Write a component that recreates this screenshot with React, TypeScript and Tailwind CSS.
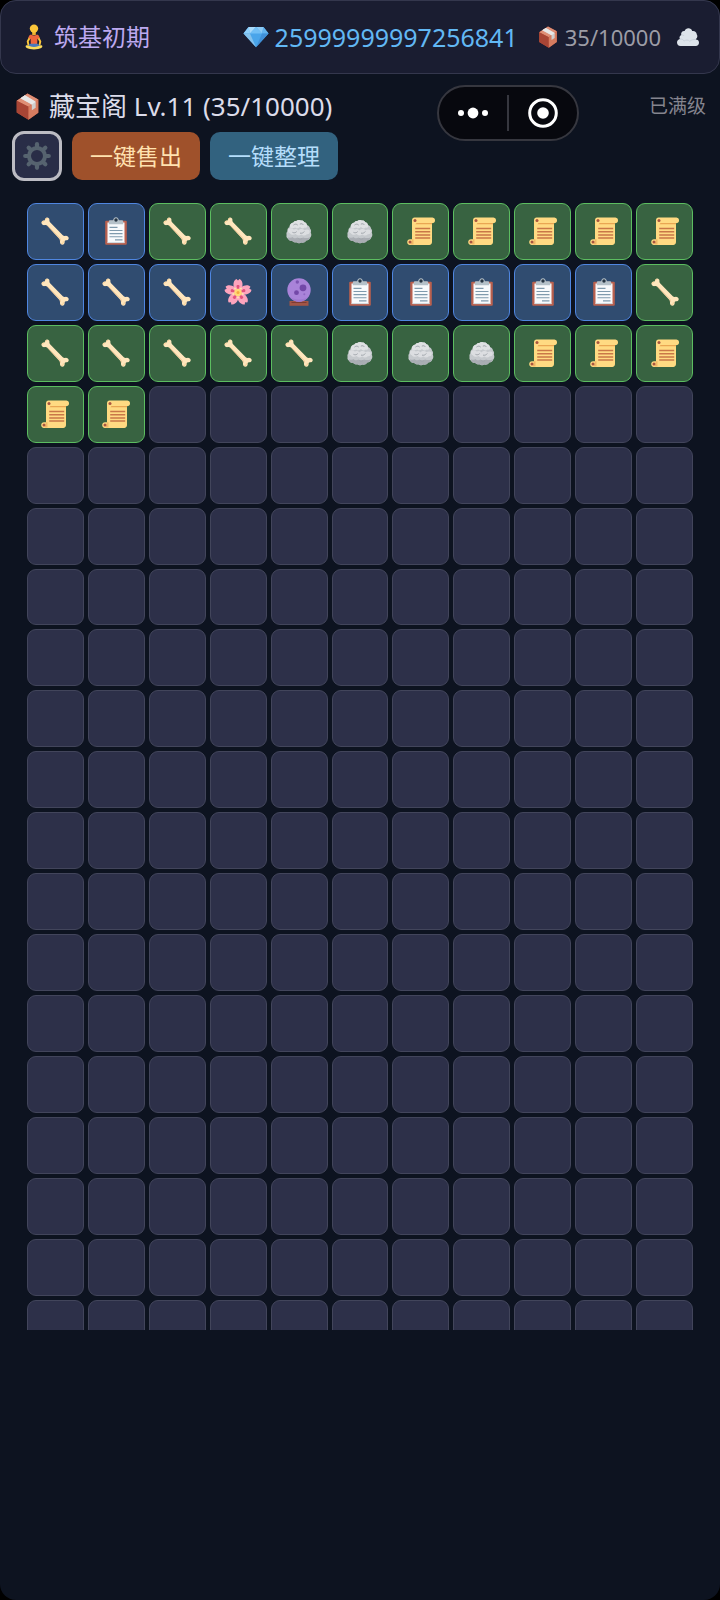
import type { ReactNode } from "react";

type Rarity = "rare" | "common";
type ItemKind = "bone" | "clipboard" | "rock" | "scroll" | "blossom" | "orb";

interface Item {
  kind: ItemKind;
  rarity: Rarity;
}

const COLUMNS = 11;
const ROWS = 19;

function stack(kind: ItemKind, rarity: Rarity, count: number): Item[] {
  return Array.from({ length: count }, () => ({ kind, rarity }));
}

const items: Item[] = [
  ...stack("bone", "rare", 1),
  ...stack("clipboard", "rare", 1),
  ...stack("bone", "common", 2),
  ...stack("rock", "common", 2),
  ...stack("scroll", "common", 5),
  ...stack("bone", "rare", 3),
  ...stack("blossom", "rare", 1),
  ...stack("orb", "rare", 1),
  ...stack("clipboard", "rare", 5),
  ...stack("bone", "common", 6),
  ...stack("rock", "common", 3),
  ...stack("scroll", "common", 5),
];

function BoneIcon() {
  return (
    <svg viewBox="0 0 28 28" className="size-7" aria-hidden="true">
      <path
        d="M5.2 0.8c1.7-.9 3.5.5 3.2 2.400-.1.900.2 1.600.9 2.300l12.500 12.700c.7.7 1.500.9 2.400.700 1.900-.4 3.700.9 3.500 2.500-.2 1.300-1.300 1.900-2.700 1.900-1 .1-1.300.5-1.300 1.400 0 1.700-.8 2.900-2.100 3-1.700.1-2.900-1.500-2.600-3.300.2-1.100 0-1.900-.8-2.700L6.300 8.700c-.7-.7-1.500-.8-2.500-.6C2 8.400.4 7.300.5 5.700.6 4.400 1.500 3.700 2.800 3.600c.8 0 1-.3 1.100-1 .1-.8.500-1.400 1.300-1.800z"
        fill="#ffe6bd"
      />
      <path d="M6.500 8.600 18.600 21c.7.7.9 1.500.7 2.700" fill="none" stroke="#f2c998" strokeWidth="1" />
      <path d="M1 5.500c.2-1 1-1.300 2-1.400M4.500 2.500c.2-.8.800-1.200 1.600-1.200M20.500 26.500c1.300.3 1.900-.7 1.900-2.100" fill="none" stroke="#fbd093" strokeWidth="1" />
    </svg>
  );
}

function ClipboardIcon() {
  return (
    <svg viewBox="0 0 28 28" className="size-7" aria-hidden="true">
      <rect x="3.200" y="3.800" width="21.600" height="24" rx="1" fill="#b9604e" />
      <path d="M5.500 5.500h17v20.500h-17z" fill="#f8fafc" />
      <path d="M5.500 25.200h17v.9h-17z" fill="#c9d3d9" />
      <path d="M6.800 7.300V4.700c0-.9.700-1.400 1.600-1.400h2.700C11.500 1.400 12.500.3 14 .3s2.500 1.100 2.900 3h2.700c.9 0 1.600.5 1.600 1.400v2.600z" fill="#b5c1c9" />
      <circle cx="14" cy="3" r="1.700" fill="#263442" />
      <path d="M7.500 10.400h8M7.500 13.500h13M7.500 16.600h13M7.500 19.700h13M13 22.900h7.500" stroke="#7f9aad" strokeWidth="1.100" />
    </svg>
  );
}

function RockIcon() {
  return (
    <svg viewBox="0 0 28 28" className="size-7" aria-hidden="true">
      <path
        d="M8.500 5.500c.5-1 1.600-1.300 2.800-1.400C12.500 3 14.600 2.700 16 3.600c1.500-.2 2.700.5 3.300 1.700 1.500.3 2.500 1.300 2.600 2.700 1.600.6 2.900 1.800 3.100 3.400 1.200 1.300 1.300 2.700.8 4.100.9 1.900.7 3.800-.6 5.200-.6 1.800-2.200 2.700-4 2.700-1 1.600-2.700 2.500-4.600 2.200-1.700 1-4 .9-5.300-.3-1.700.4-3.300-.2-4.100-1.500-2 .3-3.700-.5-4.200-2-1.400-.9-1.900-2.300-1.400-3.700-.4-1.500-.1-2.900.8-3.900-.3-2 .5-3.500 2.200-4.300.1-2.300 1.500-3.900 3.900-4.400z"
        fill="#c5c9cd"
      />
      <path
        d="M8.500 5.500c.5-1 1.600-1.300 2.800-1.400C12.500 3 14.600 2.700 16 3.600c1.500-.2 2.700.5 3.300 1.700 1.500.3 2.500 1.300 2.600 2.700 1.200 1.900-.2 3.300-2.200 2.600-1.600 1.400-3.700 1-4.700-.5-1.600 1.500-3.600 1.500-4.700.3-2 1.200-4.600.9-5.700-.5.100-2.300 1.500-3.900 3.900-4.400z"
        fill="#dfe1e3"
      />
      <path d="M3 12.600c1.600-1.700 4.200-1.800 5.700-.2 1.800-1 3.800-.5 4.700 1 1.700-1.800 4.500-1.900 6.100-.2 1.700-1.200 3.800-1 5.100.2.700 2.300-.4 4-2.700 3.900-1.500 1.500-4.100 1.600-5.600.1-1.800 1.500-4.400 1.300-5.600-.4-1.900 1.300-4.600 1-5.800-.7-1.500-.3-2.300-1.900-1.900-3.700z" fill="#dcdee1" />
      <path d="M3 20.200c1.500.9 3.200.7 4.300-.3 1.400 1.500 3.500 1.700 5.200.7 1.600 1.300 4 1.300 5.600-.1 1.900.9 4.500.8 6.800-.3-.4 2.100-1.900 3.200-3.700 3.200-1 1.600-2.700 2.500-4.600 2.200-1.700 1-4 .9-5.300-.3-1.700.4-3.300-.2-4.100-1.500-2 .3-4-.9-4.200-3.600z" fill="#a9adb3" />
      <path d="M8.800 7.800c1.200-.9 2.600-.9 3.600 0m2.800-.8c1.300-.6 2.400-.3 3 .6M7.800 15.500c1.400.6 2.700.4 3.600-.6m4 1.300c1.600.3 2.900-.2 3.700-1.400m-5.500 6.900c1 .6 2.200.6 3.100 0" fill="none" stroke="#a1a6ac" strokeWidth="1" strokeLinecap="round" />
    </svg>
  );
}

function ScrollIcon() {
  return (
    <svg viewBox="0 0 28 28" className="size-7" aria-hidden="true">
      <path d="M7.500.5h18A2.700 2.700 0 0 1 28 3.400c0 1.700-1.200 2.800-3 2.800V25c0 1.700-1.100 2.900-2.700 2.900H2.900C1.200 27.900.2 26.700.2 25s1.200-2.800 2.800-2.800h2V3.300C5 1.600 6 .5 7.500.5z" fill="#ffda82" />
      <path d="M9.500 5.900H25v1.300H8.500z" fill="#e9a653" />
      <path d="M5 22.200h1.500v5.300H3.700z" fill="#f2b866" />
      <circle cx="8" cy="3.400" r="1.500" fill="#a9553f" />
      <circle cx="3" cy="25" r="1.500" fill="#a9553f" />
      <path d="M8.200 11.500h15M8.200 14.700h15M8.200 17.900h15M8.200 21.100h15" stroke="#c97748" strokeWidth="1.500" />
    </svg>
  );
}

const petalTurns = [0, 72, 144, 216, 288];

function BlossomIcon() {
  return (
    <svg viewBox="0 0 28 28" className="size-7" aria-hidden="true">
      {petalTurns.map((turn) => (
        <g key={turn} transform={`rotate(${turn} 14 14.500)`}>
          <path d="M14 14.500C10 11.500 8.800 7.500 9.800 4.200c.5-1.700 1.500-3 2.700-3.300L14 2.600l1.500-1.700c1.200.3 2.200 1.600 2.700 3.300 1 3.300-.2 7.300-4.200 10.300z" fill="#fda4bd" />
          <path d="M14 13.500 12.400 8c.2-1.500 3-1.500 3.200 0z" fill="#e2517c" />
        </g>
      ))}
      <circle cx="14" cy="14.500" r="3.800" fill="#ffd977" />
      <circle cx="14" cy="14.500" r="1.500" fill="#f6a944" />
      <g fill="#ffe9a8">
        <circle cx="11" cy="10.500" r=".9" />
        <circle cx="17" cy="10.500" r=".9" />
        <circle cx="18.800" cy="16" r=".9" />
        <circle cx="14" cy="19.500" r=".9" />
        <circle cx="9.200" cy="16" r=".9" />
      </g>
    </svg>
  );
}

function OrbIcon() {
  return (
    <svg viewBox="0 0 28 28" className="size-7" aria-hidden="true">
      <path d="M4.500 23h19v4.800h-19z" fill="#a25545" />
      <path d="M6.500 24.500h15" stroke="#7a3b36" strokeWidth="1" />
      <circle cx="14" cy="12" r="11.700" fill="#a983d9" />
      <path d="M4.600 18.900a11.700 11.700 0 0 0 18.800 0c-5 3.300-13.800 3.300-18.800 0z" fill="#9f79d0" />
      <circle cx="18" cy="9.800" r="3.400" fill="#7348a8" />
      <circle cx="11.500" cy="14.700" r="2.400" fill="#7348a8" />
      <circle cx="12.300" cy="4" r="1.700" fill="#7d55b2" />
      <circle cx="19.300" cy="16.200" r="1" fill="#8e69c2" />
    </svg>
  );
}

function MeditationIcon() {
  return (
    <svg viewBox="0 0 26 26" className="size-[26px]" aria-hidden="true">
      <path d="M11.200 7.500h3.600V11h-3.600z" fill="#eeb22f" />
      <circle cx="13" cy="4.600" r="4.200" fill="#fcc63a" />
      <path d="M9.300 12.500 6.700 17.500l.8 3.500M16.700 12.500l2.600 5-.8 3.500" fill="none" stroke="#fcc63a" strokeWidth="1.900" strokeLinecap="round" strokeLinejoin="round" />
      <path d="M10 10.400c1.700 1.300 4.300 1.300 6 0 1.600.4 2.300 1.700 2.600 3.600l-2.200 1-.2 5.500H9.800L9.600 15l-2.200-1c.3-1.900 1-3.200 2.600-3.600z" fill="#f0663c" />
      <path d="M9.500 19.800h7l3 2-4.500 2.400h-4l-4.500-2.400z" fill="#4b79bc" />
      <path d="M5.700 21.300c2.300 0 4.500 1.800 7.300 1.800s5-1.800 7.300-1.800c1.300.2 1.500 1.700.3 2.400-2 1.200-4.600 1.700-7.600 1.700s-5.600-.5-7.600-1.700c-1.200-.7-1-2.200.3-2.400z" fill="#fbdc5b" />
    </svg>
  );
}

function GemIcon() {
  return (
    <svg viewBox="0 0 26 26" className="size-[26px]" aria-hidden="true">
      <path d="M5.500 3h15l5 6.500L13 23.200.5 9.500z" fill="#4aa5ea" />
      <path d="M5.500 3 7 9.500H.5z" fill="#8fd0fb" />
      <path d="M5.500 3h7.500L7 9.500z" fill="#a9dafa" />
      <path d="M13 3h7.500L19 9.500z" fill="#8ccaf5" />
      <path d="M13 3 7 9.500h12z" fill="#72bff5" />
      <path d="M20.500 3 19 9.500h6.500z" fill="#63b3ee" />
      <path d="M.5 9.500H7l6 13.700z" fill="#86c2ec" />
      <path d="M19 9.500h6.500L13 23.200z" fill="#4090d8" />
    </svg>
  );
}

function BoxIcon({ className }: { className: string }) {
  return (
    <svg viewBox="0 0 28 28" className={className} aria-hidden="true">
      <path d="M14 .6 2.800 8v12.300L15 27.700 25.200 20.500V6.800z" fill="#b64c36" />
      <path d="M2.800 8 14 .6l11.200 6.200L15 14.300z" fill="#df8f76" />
      <path d="M2.800 8v12.300L15 27.700V14.300z" fill="#a84535" />
      <path d="M15 14.300 25.200 6.800v13.700L15 27.700z" fill="#d67c60" />
      <path d="m6.700 5.400 4.600-3L22.500 9v6.300l-4 2.500v-6z" fill="#cfcfcf" />
      <path d="m6.700 5.400 4.600-3L22.500 9l-4 2.800z" fill="#e8e8e8" />
    </svg>
  );
}

function CloudIcon() {
  return (
    <svg viewBox="0 0 22 18" className="h-[18px] w-[22px]" aria-hidden="true">
      <path d="M3.500 18C1.300 18 0 16.500 0 14.600c0-1.900 1.200-3.200 2.900-3.500C2 9.500 2.600 7.700 4.300 7.100 3.600 4.700 5.300 2.700 7.600 3 8.300 1.200 9.800.2 11.500.3c1.800 0 3.200 1 3.700 2.700 2.300-.5 4.500 1 4.500 3.300 1.100 1.500.8 3.500-.7 4.600l-.4.700c2-.1 3.400 1.200 3.400 3.100 0 1.900-1.300 3.300-3.200 3.300z" fill="#dde3ea" />
      <path d="M2.900 11.100c2.200-.3 3.500.6 4.200 2 1.500-1.500 4.400-1.400 5.700.2 1.500-1.500 3.700-1.900 5.800-1.700M4.300 7.100c1.200-.3 2.300.1 2.900.9" fill="none" stroke="#c3cbd5" strokeWidth=".8" />
    </svg>
  );
}

const toothTurns = [0, 45, 90, 135, 180, 225, 270, 315];

function GearIcon() {
  return (
    <svg viewBox="0 0 28 28" className="size-7" aria-hidden="true">
      <circle cx="14" cy="14" r="8" fill="none" stroke="#56636f" strokeWidth="4" />
      {toothTurns.map((turn) => (
        <path key={turn} d="M14 2.200v3" stroke="#56636f" strokeWidth="4.200" strokeLinecap="round" transform={`rotate(${turn} 14 14)`} />
      ))}
    </svg>
  );
}

const itemIcons: Record<ItemKind, { label: string; icon: ReactNode }> = {
  bone: { label: "骨", icon: <BoneIcon /> },
  clipboard: { label: "图纸", icon: <ClipboardIcon /> },
  rock: { label: "矿石", icon: <RockIcon /> },
  scroll: { label: "卷轴", icon: <ScrollIcon /> },
  blossom: { label: "灵花", icon: <BlossomIcon /> },
  orb: { label: "灵珠", icon: <OrbIcon /> },
};

const rarityStyles: Record<Rarity, string> = {
  rare: "border-[#4f86e0] bg-[#304c70]",
  common: "border-[#5cbd60] bg-[#386341]",
};

function Slot({ item }: { item?: Item }) {
  if (!item) {
    return <div className="aspect-square rounded-[9px] border border-[#42455b] bg-[#2d3049]" />;
  }
  const { label, icon } = itemIcons[item.kind];
  return (
    <button
      type="button"
      aria-label={label}
      className={`flex aspect-square items-center justify-center rounded-[9px] border ${rarityStyles[item.rarity]}`}
    >
      {icon}
    </button>
  );
}

function StatusBar() {
  return (
    <header className="flex items-center justify-between rounded-2xl border border-[#34374d] bg-[#1a1d31] px-5 py-5 leading-8">
      <div className="flex items-center gap-[7px] text-2xl leading-8 text-[#bda9f0]">
        <MeditationIcon />
        <span>筑基初期</span>
      </div>
      <div className="flex items-center gap-4">
        <div className="flex items-center gap-[6px] text-[25px] text-[#62b8f4]">
          <GemIcon />
          <span>25999999997256841</span>
        </div>
        <div className="flex items-center gap-[3px] text-[22px] text-[#9c9ca6]">
          <span className="flex w-7 justify-center">
            <BoxIcon className="size-[22px]" />
          </span>
          <span>35/10000</span>
        </div>
        <CloudIcon />
      </div>
    </header>
  );
}

// Floating host-app capsule: more menu and close target
function Capsule() {
  return (
    <div className="absolute top-[11px] right-[141px] flex h-[56px] w-[142px] items-center rounded-full border-2 border-[#36373f] bg-[#07080e]">
      <button type="button" aria-label="更多" className="flex flex-1 justify-center">
        <svg viewBox="0 0 30 12" className="h-3 w-[30px]" fill="#ffffff" aria-hidden="true">
          <circle cx="3" cy="6" r="3" />
          <circle cx="15" cy="6" r="5.400" />
          <circle cx="27" cy="6" r="3" />
        </svg>
      </button>
      <span className="h-9 w-[2px] bg-[#36373f]" />
      <button type="button" aria-label="关闭" className="flex flex-1 justify-center">
        <svg viewBox="0 0 30 30" className="size-[30px]" aria-hidden="true">
          <circle cx="15" cy="15" r="13.300" fill="none" stroke="#ffffff" strokeWidth="3" />
          <circle cx="15" cy="15" r="5.800" fill="#ffffff" />
        </svg>
      </button>
    </div>
  );
}

export default function App() {
  const slots = Array.from({ length: COLUMNS * ROWS }, (_, i) => items[i]);

  return (
    <div className="min-h-screen bg-black font-['Noto_Sans','Noto_Sans_CJK_SC',sans-serif]">
      <div className="min-h-screen rounded-2xl bg-[#0d1320]">
        <StatusBar />

        <main className="relative pt-4">
          <div className="flex items-center justify-between px-[14px]">
            <h1 className="flex items-center gap-2 text-[26px] leading-8 text-[#dcdcea]">
              <BoxIcon className="size-[27px]" />
              藏宝阁 Lv.11 (35/10000)
            </h1>
            <span className="text-[19px] leading-8 text-[#85858f]">已满级</span>
          </div>
          <Capsule />

          <div className="mt-[9px] flex items-center gap-[10px] px-3">
            <button
              type="button"
              aria-label="设置"
              className="flex size-[50px] items-center justify-center rounded-[12px] border-[3px] border-[#bcbcc3] bg-[#292d47]"
            >
              <GearIcon />
            </button>
            <button type="button" className="h-12 rounded-[10px] bg-[#9f512b] px-[18px] text-[23px] leading-8 text-[#ffe2b0]">
              一键售出
            </button>
            <button type="button" className="h-12 rounded-[10px] bg-[#32627f] px-[18px] text-[23px] leading-8 text-[#b5ddfb]">
              一键整理
            </button>
          </div>

          <div className="mx-[27px] mt-[22px] h-[1127px] overflow-y-auto [scrollbar-width:none]">
            <div className="grid grid-cols-11 gap-1">
              {slots.map((item, i) => (
                <Slot key={i} item={item} />
              ))}
            </div>
          </div>
        </main>
      </div>
    </div>
  );
}
